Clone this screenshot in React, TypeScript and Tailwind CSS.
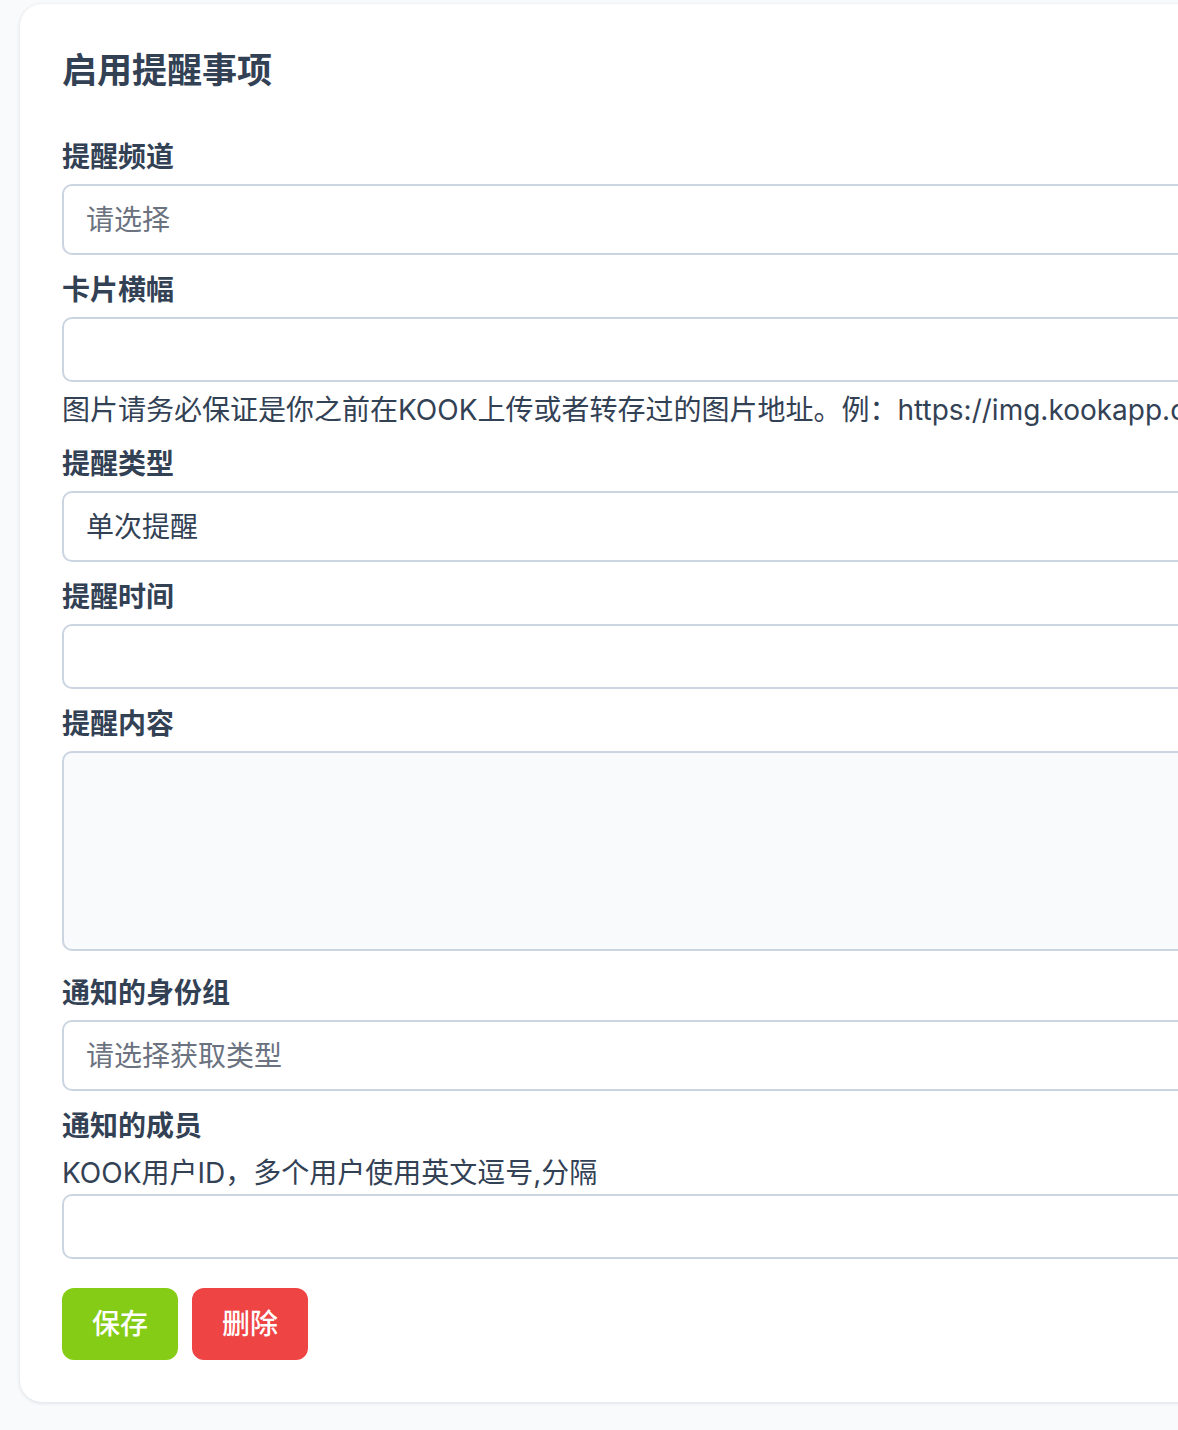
import React from 'react';

const font = "font-['Inter','Noto_Sans_CJK_SC',sans-serif]";

const inputBase =
  'block w-full rounded-[10px] border-2 border-[#cbd5e1] px-[22px] text-[28px] text-[#334155] outline-none placeholder:text-[#6b7280]';

function Label({ children }: { children: React.ReactNode }) {
  return <div className="mb-[7px] text-[28px] font-bold leading-[40px] text-[#334155]">{children}</div>;
}

function Help({ children, className = '' }: { children: React.ReactNode; className?: string }) {
  return (
    <div className={`whitespace-nowrap text-[28px] leading-[40px] text-[#334155] ${className}`}>{children}</div>
  );
}

function SelectBox({ value, placeholder }: { value?: string; placeholder?: string }) {
  return (
    <div className={`${inputBase} flex h-[71px] items-center bg-white`}>
      {value ? (
        <span className="text-[#334155]">{value}</span>
      ) : (
        <span className="text-[#6b7280]">{placeholder}</span>
      )}
    </div>
  );
}

export default function App() {
  return (
    <div className={`${font} h-[1430px] w-[1178px] overflow-hidden bg-[#f8fafc] pl-[20px] pt-[4px]`}>
      <div className="w-[1500px] rounded-[22px] bg-white px-[42px] pb-[42px] pt-[42px] shadow-[0_1px_4px_rgba(15,23,42,0.12)]">
        <h2 className="mb-[43px] text-[35px] font-semibold leading-[48px] text-[#334155]">启用提醒事项</h2>

        <div className="flex flex-col">
          <div className="mb-[15px]">
            <Label>提醒频道</Label>
            <SelectBox placeholder="请选择" />
          </div>

          <div className="mb-[14px]">
            <Label>卡片横幅</Label>
            <input className={`${inputBase} h-[65px] bg-white`} readOnly />
            <Help className="mt-[8px]">
              图片请务必保证是你之前在KOOK上传或者转存过的图片地址。例：https://img.kookapp.cn/assets/2022-08/example.png
            </Help>
          </div>

          <div className="mb-[15px]">
            <Label>提醒类型</Label>
            <SelectBox value="单次提醒" />
          </div>

          <div className="mb-[15px]">
            <Label>提醒时间</Label>
            <input className={`${inputBase} h-[65px] bg-white`} readOnly />
          </div>

          <div className="mb-[22px]">
            <Label>提醒内容</Label>
            <textarea className={`${inputBase} h-[200px] resize-none bg-[#f8fafc]`} readOnly />
          </div>

          <div className="mb-[15px]">
            <Label>通知的身份组</Label>
            <SelectBox placeholder="请选择获取类型" />
          </div>

          <div>
            <Label>通知的成员</Label>
            <Help className="mb-[1px]">KOOK用户ID，多个用户使用英文逗号,分隔</Help>
            <input className={`${inputBase} h-[65px] bg-white`} readOnly />
          </div>
        </div>

        <div className="mt-[29px] flex gap-[14px]">
          <button className="h-[72px] w-[116px] rounded-[12px] bg-[#84cc16] text-[28px] font-medium text-white">
            保存
          </button>
          <button className="h-[72px] w-[116px] rounded-[12px] bg-[#ef4444] text-[28px] font-medium text-white">
            删除
          </button>
        </div>
      </div>
    </div>
  );
}
